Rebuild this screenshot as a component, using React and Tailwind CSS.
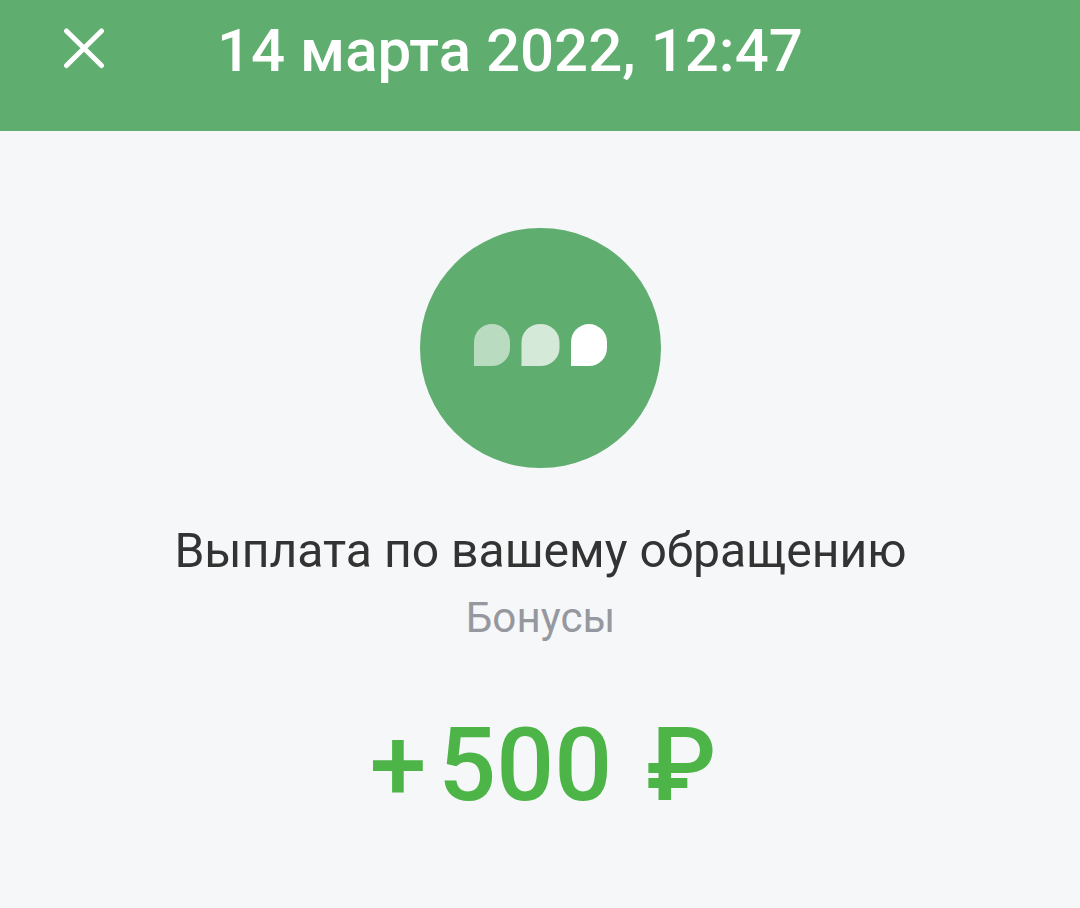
const drops = [
  { left: 474, width: 36, opacity: 0.56 },
  { left: 521.5, width: 38, opacity: 0.73 },
  { left: 571, width: 36, opacity: 1 },
];

function CloseIcon() {
  return (
    <svg width="42" height="42" viewBox="0 0 42 42" fill="none" stroke="white" strokeWidth="5" strokeLinecap="round">
      <path d="M3.500 3L38.500 37.500M38.500 3L3.500 37.500" />
    </svg>
  );
}

function OperationIcon() {
  return (
    <div className="mx-auto mt-[97px] h-60 w-[241px] rounded-full bg-[#60ad70]">
      <svg className="h-full w-full" viewBox="420 228 241 240" fill="white">
        {drops.map((d) => (
          <path
            key={d.left}
            opacity={d.opacity}
            d={`M${d.left} 366V342a${d.width / 2} 18 0 0 1 ${d.width} 0v6a${d.width / 2} 18 0 0 1 ${-d.width / 2} 18z`}
          />
        ))}
      </svg>
    </div>
  );
}

export default function App() {
  return (
    <div className="min-h-screen bg-[#f5f7f9] font-['Roboto',sans-serif]">
      <header className="flex h-[131px] bg-[#60ad70] pl-[63px] text-white">
        <button className="mt-7 h-[42px] w-[42px]" aria-label="Закрыть">
          <CloseIcon />
        </button>
        <h1 className="ml-[112px] mt-[15px] whitespace-nowrap text-[60px] font-medium leading-[72px]">
          14 марта 2022, 12:47
        </h1>
      </header>

      <main className="flex flex-col items-center whitespace-nowrap">
        <OperationIcon />
        <h2 className="mt-[53px] pl-px text-[48.1px] leading-[60px] text-[#333333]">Выплата по вашему обращению</h2>
        <p className="mt-3 pl-px text-[42.2px] leading-[50px] text-[#95989e]">Бонусы</p>
        <div className="mt-[62px] flex pl-1.5 text-[102px] font-medium leading-[120px] text-[#4db548]">
          <span>+</span>
          <span className="ml-3">500</span>
          <span className="ml-[34px]">₽</span>
        </div>
      </main>
    </div>
  );
}
